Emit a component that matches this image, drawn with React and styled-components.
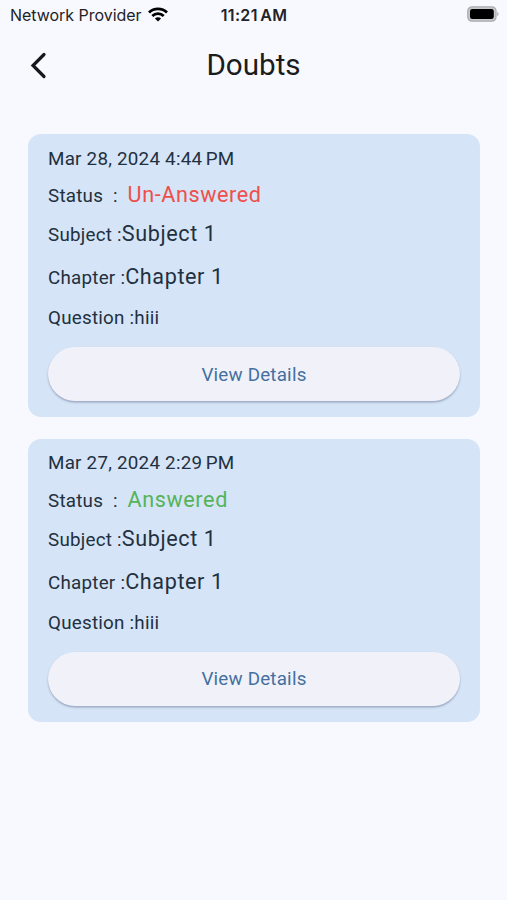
import React from 'react';
import styled, {createGlobalStyle, ThemeProvider} from 'styled-components';

const theme = {
  colors: {
    background: '#f8f9ff',
    card: '#d5e4f6',
    text: '#22303f',
    title: '#1b1c20',
    button: '#f1f2f9',
    link: '#44709f',
    pending: '#ee4f4a',
    answered: '#54b45a'
  }
};

const GlobalStyle = createGlobalStyle`
  body{
    margin: 0;
    background: ${theme.colors.background};
    font-family: Roboto, sans-serif;
  }
`;

const Screen = styled.div`
  min-height: 900px;
  box-sizing: border-box;
`;

const StatusBar = styled.div`
  display: grid;
  grid-template-columns: 1fr auto 1fr;
  align-items: center;
  height: 30px;
  padding: 0 8px 0 10px;
  font-family: Inter, sans-serif;
  color: #222327;
`;

const Carrier = styled.div`
  display: flex;
  align-items: center;
  gap: 6px;
  font-size: 16px;
  letter-spacing: -0.03px;
  white-space: nowrap;

  svg{
    margin-top: -1px;
  }
`;

const Clock = styled.div`
  margin-left: -1px;
  font-size: 16px;
  font-weight: 600;
  letter-spacing: 0.35px;
  word-spacing: -2px;
`;

const BatteryIcon = styled.svg`
  justify-self: end;
  margin-top: -2px;
`;

const Header = styled.header`
  display: grid;
  grid-template-columns: 60px 1fr 60px;
  align-items: center;
  height: 70px;
`;

const BackButton = styled.button`
  display: flex;
  margin-left: 29px;
  padding: 0;
  border: none;
  background: none;
`;

const Title = styled.h1`
  margin: -1px 0 0;
  font-size: 29.6px;
  font-weight: 400;
  text-align: center;
  color: ${(props) => props.theme.colors.title};
`;

const DoubtList = styled.main`
  display: flex;
  flex-direction: column;
  gap: 22px;
  padding: 34.4px 27px 0 28px;
`;

const Card = styled.article`
  box-sizing: border-box;
  height: 282.7px;
  padding: 11.4px 20px 0;
  border-radius: 13px;
  background: ${(props) => props.theme.colors.card};
  color: ${(props) => props.theme.colors.text};
`;

const Row = styled.div`
  display: flex;
  align-items: baseline;
  height: ${(props) => props.$height}px;
  line-height: 27px;
  white-space: pre;
`;

const Label = styled.span`
  font-size: 18.8px;
  letter-spacing: 0.24px;
`;

const Meridiem = styled.span`
  margin-left: 3.5px;
`;

const Value = styled.span`
  font-size: 21.6px;
  letter-spacing: 0.6px;
  color: ${(props) => props.theme.colors[props.$color || 'text']};
`;

const DetailsButton = styled.button`
  display: block;
  width: 100%;
  height: 54px;
  padding: 1px 0 0;
  border: none;
  border-radius: 27px;
  background: ${(props) => props.theme.colors.button};
  box-shadow: 0 1.5px 2px rgba(60, 70, 110, 0.38);
  color: ${(props) => props.theme.colors.link};
  font-family: inherit;
  font-size: 18.8px;
  letter-spacing: 0.2px;
`;

const doubts = [
  {date: 'Mar 28, 2024 4:44', meridiem: 'PM', answered: false, subject: 'Subject 1', chapter: 'Chapter 1', question: 'hiii'},
  {date: 'Mar 27, 2024 2:29', meridiem: 'PM', answered: true, subject: 'Subject 1', chapter: 'Chapter 1', question: 'hiii'}
];

function Wifi(){
  return(
    <svg width="20" height="15" viewBox="0 0 20 15" fill="none" stroke="#000" strokeWidth="2.8">
      <path d="M1 5.4C6 0.6 14 0.6 19 5.4"/>
      <path d="M4.3 8.9C7.5 5.9 12.5 5.9 15.7 8.9"/>
      <path d="M10 14.6L6.9 11.5C8.6 9.9 11.4 9.9 13.1 11.5Z" fill="#000" stroke="none"/>
    </svg>
  );
}

function Battery(){
  return(
    <BatteryIcon width="32" height="16" viewBox="0 0 32 16">
      <rect x="0.8" y="0.8" width="28.2" height="14.4" rx="4.2" fill="#c8c9cd" stroke="#abacb0" strokeWidth="1.3"/>
      <rect x="3" y="3" width="23.8" height="10" rx="2.2" fill="#000"/>
      <path d="M30.3 5.8C32 6.6 32 9.4 30.3 10.2Z" fill="#a5a6aa"/>
    </BatteryIcon>
  );
}

function Doubt({doubt}){
  return(
    <Card>
      <Row $height={35.2}>
        <Label>{doubt.date}<Meridiem>{doubt.meridiem}</Meridiem></Label>
      </Row>
      <Row $height={39}>
        <Label>{'Status  :  '}</Label>
        <Value $color={doubt.answered ? 'answered' : 'pending'}>
          {doubt.answered ? 'Answered' : 'Un-Answered'}
        </Value>
      </Row>
      <Row $height={43}>
        <Label>Subject :</Label>
        <Value>{doubt.subject}</Value>
      </Row>
      <Row $height={42}>
        <Label>Chapter :</Label>
        <Value>{doubt.chapter}</Value>
      </Row>
      <Row $height={42.2}>
        <Label>Question :{doubt.question}</Label>
      </Row>
      <DetailsButton type="button">View Details</DetailsButton>
    </Card>
  );
}

export default function App(){
  return(
    <ThemeProvider theme={theme}>
      <GlobalStyle/>
      <Screen>
        <StatusBar>
          <Carrier>Network Provider <Wifi/></Carrier>
          <Clock>11:21 AM</Clock>
          <Battery/>
        </StatusBar>
        <Header>
          <BackButton type="button" aria-label="Back">
            <svg width="20" height="28" viewBox="0 0 20 28" fill="none" stroke="#17181c" strokeWidth="3.2" strokeLinecap="round">
              <path d="M15 3.5L4 14.5L15 25.5"/>
            </svg>
          </BackButton>
          <Title>Doubts</Title>
        </Header>
        <DoubtList>
          {doubts.map((doubt) => <Doubt key={doubt.date} doubt={doubt}/>)}
        </DoubtList>
      </Screen>
    </ThemeProvider>
  );
}
